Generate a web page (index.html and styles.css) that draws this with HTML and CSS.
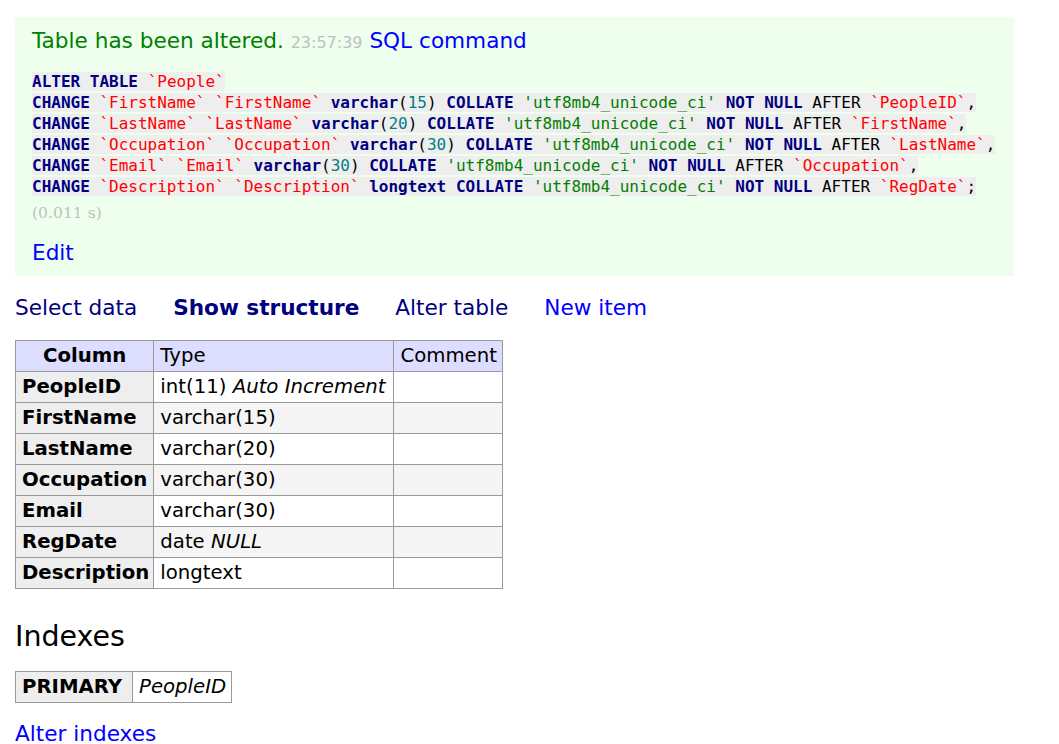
FILE: index.html
```html
<!DOCTYPE html>
<html>
<head>
<meta charset="utf-8">
<link rel="stylesheet" href="styles.css">
</head>
<body>
<div class="content">
  <div class="message">
    <div class="msg-line">Table has been altered. <span class="time">23:57:39</span> <a class="link" href="#sql">SQL command</a></div>
    <pre class="sql"><code><b class="k">ALTER</b> <b class="k">TABLE</b> <span class="bac">`People`</span>
<b class="k">CHANGE</b> <span class="bac">`FirstName`</span> <span class="bac">`FirstName`</span> <b class="k">varchar</b>(<span class="num">15</span>) <b class="k">COLLATE</b> <span class="str">'utf8mb4_unicode_ci'</span> <b class="k">NOT</b> <b class="k">NULL</b> AFTER <span class="bac">`PeopleID`</span>,
<b class="k">CHANGE</b> <span class="bac">`LastName`</span> <span class="bac">`LastName`</span> <b class="k">varchar</b>(<span class="num">20</span>) <b class="k">COLLATE</b> <span class="str">'utf8mb4_unicode_ci'</span> <b class="k">NOT</b> <b class="k">NULL</b> AFTER <span class="bac">`FirstName`</span>,
<b class="k">CHANGE</b> <span class="bac">`Occupation`</span> <span class="bac">`Occupation`</span> <b class="k">varchar</b>(<span class="num">30</span>) <b class="k">COLLATE</b> <span class="str">'utf8mb4_unicode_ci'</span> <b class="k">NOT</b> <b class="k">NULL</b> AFTER <span class="bac">`LastName`</span>,
<b class="k">CHANGE</b> <span class="bac">`Email`</span> <span class="bac">`Email`</span> <b class="k">varchar</b>(<span class="num">30</span>) <b class="k">COLLATE</b> <span class="str">'utf8mb4_unicode_ci'</span> <b class="k">NOT</b> <b class="k">NULL</b> AFTER <span class="bac">`Occupation`</span>,
<b class="k">CHANGE</b> <span class="bac">`Description`</span> <span class="bac">`Description`</span> <b class="k">longtext</b> <b class="k">COLLATE</b> <span class="str">'utf8mb4_unicode_ci'</span> <b class="k">NOT</b> <b class="k">NULL</b> AFTER <span class="bac">`RegDate`</span>;</code></pre>
    <p class="elapsed">(0.011 s)</p>
    <p class="edit"><a class="link" href="#edit">Edit</a></p>
  </div>

  <nav class="links">
    <a class="visited" href="#select">Select data</a>
    <a class="visited active" href="#structure">Show structure</a>
    <a class="visited" href="#alter">Alter table</a>
    <a class="link" href="#new">New item</a>
  </nav>

  <table class="grid odds">
    <thead>
      <tr><th class="head-col">Column</th><td>Type</td><td>Comment</td></tr>
    </thead>
    <tbody>
      <tr><th>PeopleID</th><td>int(11) <i>Auto Increment</i></td><td></td></tr>
      <tr><th>FirstName</th><td>varchar(15)</td><td></td></tr>
      <tr><th>LastName</th><td>varchar(20)</td><td></td></tr>
      <tr><th>Occupation</th><td>varchar(30)</td><td></td></tr>
      <tr><th>Email</th><td>varchar(30)</td><td></td></tr>
      <tr><th>RegDate</th><td>date <i>NULL</i></td><td></td></tr>
      <tr><th>Description</th><td>longtext</td><td></td></tr>
    </tbody>
  </table>

  <h3 class="section">Indexes</h3>
  <table class="grid idx">
    <tbody>
      <tr><th>PRIMARY</th><td><i>PeopleID</i></td></tr>
    </tbody>
  </table>

  <p class="after"><a class="link" href="#indexes">Alter indexes</a></p>
</div>
</body>
</html>
```

FILE: styles.css
```css
html, body {
  margin: 0;
  padding: 0;
  background: #fff;
}
body {
  font-family: "DejaVu Sans", Verdana, sans-serif;
  font-size: 21.6px;
  line-height: 27px;
  color: #000;
}
.content {
  padding: 17px 45px 0 15px;
}
a {
  text-decoration: none;
}
.link {
  color: #0000ff;
}
.visited {
  color: #000080;
}
.active {
  font-weight: bold;
}
.message {
  background: #eeffee;
  color: #008000;
  padding: 11px 17px 10px 17px;
}
.msg-line {
  line-height: 26px;
}
.time {
  color: #c0c0c0;
  font-size: 16px;
}
.sql {
  margin: 15px 0 0;
  font-family: "DejaVu Sans Mono", monospace;
  font-size: 16px;
  line-height: 21px;
  color: #000;
  white-space: pre;
}
.sql code {
  font-family: inherit;
  background: #eeeeee;
}
.k {
  color: #000080;
  font-weight: bold;
}
.bac {
  color: #ff0000;
}
.num {
  color: #007f7f;
}
.str {
  color: #008000;
}
.elapsed {
  margin: 6px 0 0;
  font-family: "DejaVu Serif", serif;
  font-size: 15.6px;
  line-height: 20px;
  color: #c0c0c0;
}
.edit {
  margin: 16px 0 0;
}
.links {
  display: flex;
  gap: 36px;
  margin: 18px 0 0;
  line-height: 27px;
}
.grid {
  border-collapse: collapse;
  font-size: 19.7px;
  line-height: 22px;
}
.odds {
  margin-top: 19px;
}
.grid th,
.grid td {
  border: 1px solid #999;
  padding: 4px 7px 4px 6px;
  text-align: left;
  vertical-align: top;
}
.odds td:nth-child(2) {
  padding-right: 8px;
}
.odds td:nth-child(3) {
  padding-right: 5px;
}
.grid th {
  background: #eeeeee;
  font-weight: bold;
  padding-right: 4px;
}
.grid thead th,
.grid thead td {
  background: #ddddff;
}
.grid thead th.head-col {
  text-align: center;
  padding: 4px 8px;
}
.odds tbody tr:nth-child(2n) td {
  background: #f5f5f5;
}
.section {
  margin: 30px 0 0;
  font-size: 28.5px;
  line-height: 35px;
  font-weight: normal;
}
.idx {
  margin-top: 17px;
}
.idx th {
  padding-right: 10px;
}
.idx td {
  padding-right: 5px;
}
.after {
  margin: 17px 0 0;
}
```
